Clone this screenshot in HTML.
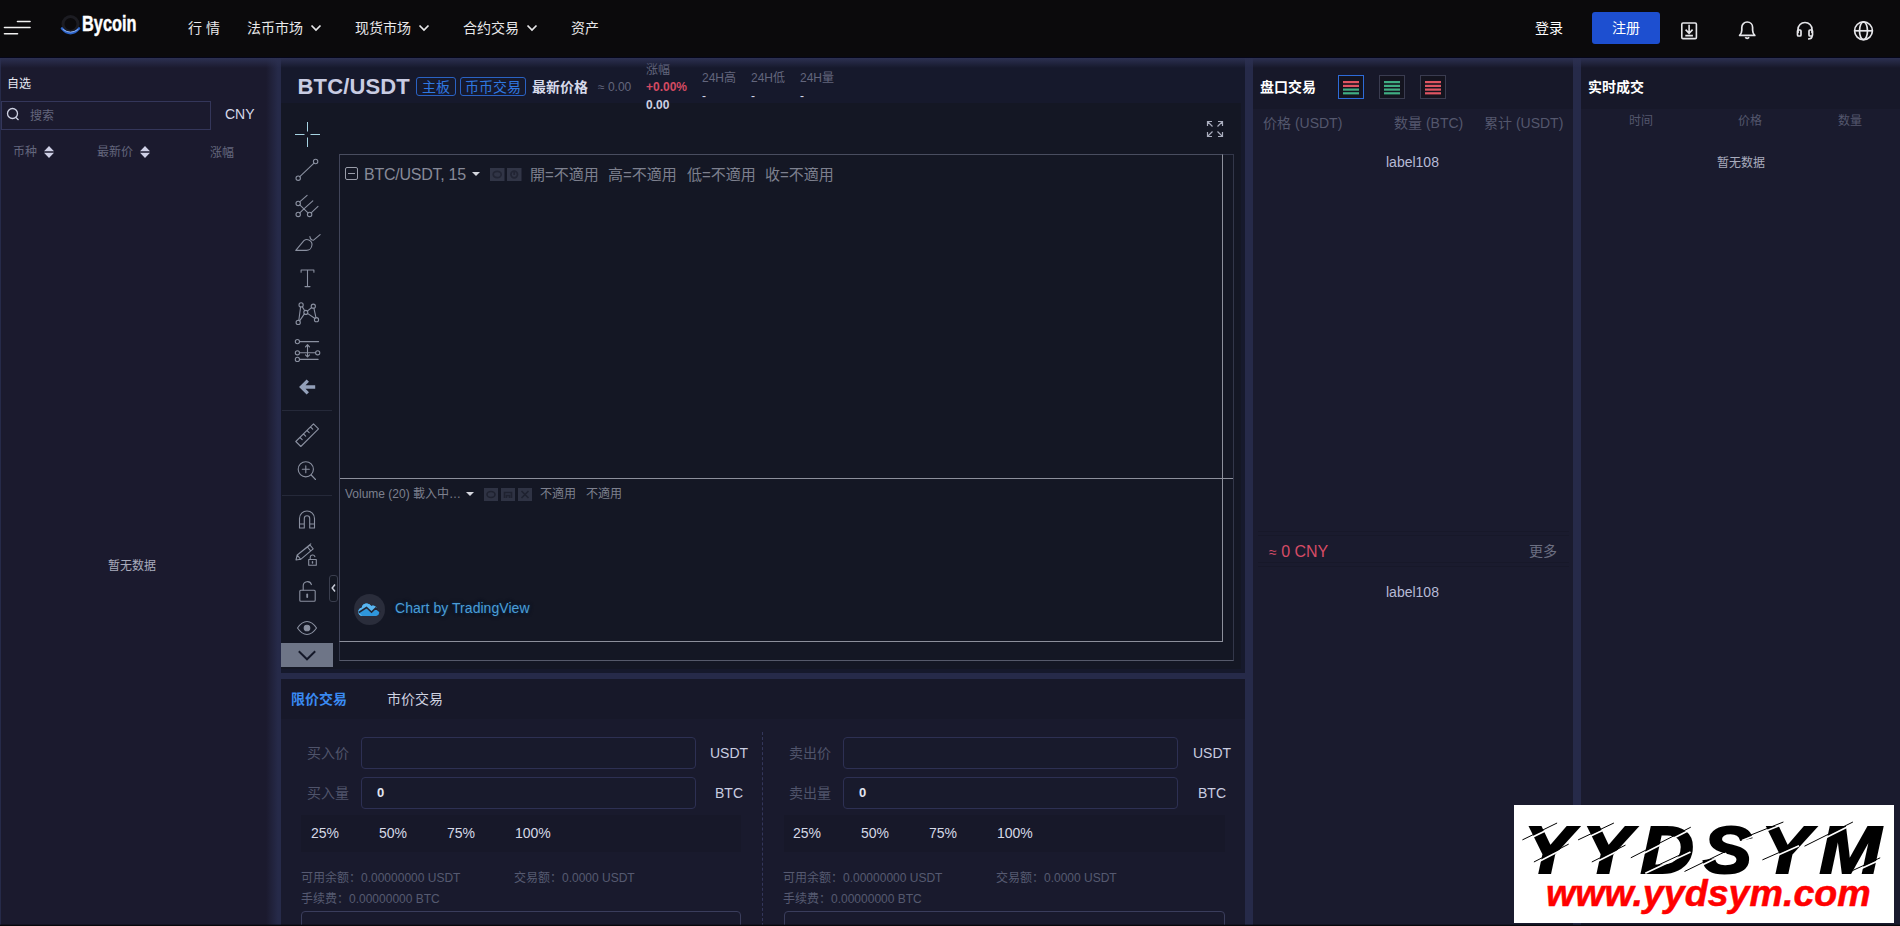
<!DOCTYPE html>
<html lang="zh-CN">
<head>
<meta charset="utf-8">
<title>BTC/USDT - Bycoin</title>
<style>
*{box-sizing:border-box;margin:0;padding:0}
html,body{width:1900px;height:926px;overflow:hidden;background:#262a49;font-family:"Liberation Sans","Noto Sans CJK SC",sans-serif;color:#c9cde0}
.abs{position:absolute}
.t{position:absolute;white-space:nowrap;line-height:1}
#hdr{position:absolute;left:0;top:0;width:1900px;height:58px;background:#0b0a0c}
.nav{color:#e8e8ea;font-size:14px}
.panel{position:absolute;background:#1a1b2e}
.grey{color:#63667d}
.dim{color:#54576d}
.obi{width:26px;height:24px;border:1px solid #3a3c50;background:#14141f}
.lbl{font-size:14px;color:#50546b}
.unit{font-size:14px;color:#c9cde0}
.pct{font-size:14px;color:#d5d8e6}
.inf{font-size:12px;color:#565a71}
.inp{width:335px;height:32px;border:1px solid #2d3053;border-radius:4px;background:#181a2c}
.tag{border:1px solid #2a62c4;border-radius:3px}
.leg{font-size:15px;color:#7d808e}
</style>
</head>
<body>
<!-- HEADER -->
<div id="hdr">
  <svg class="abs" style="left:0;top:14px" width="40" height="28" viewBox="0 0 40 28">
    <g stroke="#f2f2f2" stroke-width="1.6" stroke-linecap="round">
      <line x1="17.5" y1="7.5" x2="30" y2="7.5"/><line x1="4.5" y1="13.5" x2="30" y2="13.5"/><line x1="4.5" y1="19.8" x2="17.5" y2="19.8"/>
    </g>
  </svg>
  <svg class="abs" style="left:58px;top:13px" width="26" height="26" viewBox="0 0 26 26">
    <circle cx="12.5" cy="11" r="7.5" fill="none" stroke="#1c1c22" stroke-width="3"/>
    <path d="M4 15.5 Q12.5 25 21 15.5" fill="none" stroke="#2b63c9" stroke-width="2.6" stroke-linecap="round"/>
    <path d="M5 16.5 Q12.5 22 20 16.5" fill="none" stroke="#8fb0ee" stroke-width="1" stroke-linecap="round"/>
  </svg>
  <div class="t" id="logo" style="left:82px;top:13.8px;font-size:21.5px;font-weight:bold;color:#fff;-webkit-text-stroke:.4px #fff;transform:scaleX(.76);transform-origin:0 0;letter-spacing:0">Bycoin</div>
  <div class="t nav" style="left:188px;top:21px">行 情</div>
  <div class="t nav" style="left:247px;top:21px">法币市场</div>
  <div class="t nav" style="left:355px;top:21px">现货市场</div>
  <div class="t nav" style="left:463px;top:21px">合约交易</div>
  <div class="t nav" style="left:571px;top:21px">资产</div>
  <svg class="abs chev" style="left:309px;top:23px" width="14" height="10" viewBox="0 0 14 10"><path d="M2.5 2.5 L7 7 L11.5 2.5" fill="none" stroke="#e8e8ea" stroke-width="1.7"/></svg>
  <svg class="abs chev" style="left:417px;top:23px" width="14" height="10" viewBox="0 0 14 10"><path d="M2.5 2.5 L7 7 L11.5 2.5" fill="none" stroke="#e8e8ea" stroke-width="1.7"/></svg>
  <svg class="abs chev" style="left:525px;top:23px" width="14" height="10" viewBox="0 0 14 10"><path d="M2.5 2.5 L7 7 L11.5 2.5" fill="none" stroke="#e8e8ea" stroke-width="1.7"/></svg>
  <div class="t nav" style="left:1535px;top:21px;color:#fff">登录</div>
  <div class="abs" style="left:1592px;top:12px;width:68px;height:32px;background:#1d4fd0;border-radius:3px"></div>
  <div class="t nav" style="left:1612px;top:21px;color:#fff">注册</div>
  <!-- download -->
  <svg class="abs" style="left:1677px;top:18px" width="24" height="24" viewBox="0 0 24 24" fill="none" stroke="#e6e6ea" stroke-width="1.6">
    <rect x="4.800" y="5" width="14.600" height="15.600" rx="1.200"/><path d="M12.100 6.800v8.500M8.600 11.600l3.500 3.700l3.500-3.700M8.300 17.600h7.600" />
  </svg>
  <!-- bell -->
  <svg class="abs" style="left:1735px;top:18px" width="24" height="24" viewBox="0 0 24 24" fill="none" stroke="#e6e6ea" stroke-width="1.700" stroke-linejoin="round">
    <path d="M4.600 17.400h15.200c-1.500-1.400-2.200-3-2.200-5.200v-2.800c0-3.100-2.400-5.400-5.400-5.400s-5.400 2.300-5.400 5.400v2.800c0 2.200-.7 3.800-2.200 5.200z"/><path d="M10.300 19.300c.5.700 1.100 1 1.900 1s1.400-.3 1.900-1"/>
  </svg>
  <!-- headset -->
  <svg class="abs" style="left:1793px;top:18px" width="24" height="24" viewBox="0 0 24 24" fill="none" stroke="#e6e6ea" stroke-width="1.7">
    <path d="M5 15v-3.500c0-4 3-7 7-7s7 3 7 7V15"/><rect x="4.500" y="12" width="3.500" height="6" rx="1"/><rect x="16" y="12" width="3.500" height="6" rx="1"/><path d="M19 18c0 2-1.500 3-4 3"/>
  </svg>
  <!-- globe -->
  <svg class="abs" style="left:1851px;top:18px" width="24" height="24" viewBox="0 0 24 24" fill="none" stroke="#e6e6ea" stroke-width="1.7">
    <circle cx="12.500" cy="12.800" r="8.900"/><ellipse cx="12.500" cy="12.800" rx="4" ry="8.900"/><path d="M3.600 12.800h17.800"/>
  </svg>
</div>

<!-- LEFT PANEL -->
<div class="panel" id="left" style="left:1px;top:58px;width:271px;height:868px;background:#1b1a2e"></div>
<div class="t" style="left:7px;top:78px;font-size:12px;color:#e6e8f2">自选</div>
<div class="abs" style="left:1px;top:101px;width:210px;height:29px;border:1px solid #34365a"></div>
<svg class="abs" style="left:5px;top:106px" width="16" height="16" viewBox="0 0 16 16" fill="none" stroke="#cfd2e3" stroke-width="1.3"><circle cx="7.500" cy="7.500" r="5"/><path d="M11 11.500l2.500 2.500"/></svg>
<div class="t grey" style="left:30px;top:110px;font-size:12px">搜索</div>
<div class="t" style="left:225px;top:107px;font-size:14px;color:#d5d8e8">CNY</div>
<div class="t grey" style="left:13px;top:146px;font-size:12px">币种</div>
<div class="t grey" style="left:97px;top:146px;font-size:12px">最新价</div>
<div class="t grey" style="left:210px;top:147px;font-size:12px">涨幅</div>
<svg class="abs" style="left:43px;top:145px" width="12" height="14" viewBox="0 0 12 14"><path d="M6 1L11 6.200h-10zM6 13L1 7.800h10z" fill="#cfd0e6"/></svg>
<svg class="abs" style="left:139px;top:145px" width="12" height="14" viewBox="0 0 12 14"><path d="M6 1L11 6.200h-10zM6 13L1 7.800h10z" fill="#cfd0e6"/></svg>
<div class="t" style="left:108px;top:560px;font-size:12px;color:#a9acbd">暂无数据</div>

<div class="abs" style="left:266px;top:58px;width:12px;height:868px;background:linear-gradient(to right,#1b1a2e,#262a49)"></div>
<!-- CENTER TOP PANEL -->
<div class="panel" id="ctop" style="left:281px;top:58px;width:964px;height:615px;background:#16192c"></div>
<div class="abs" id="chartbg" style="left:281px;top:103px;width:960px;height:566px;background:#141724"></div>
<!-- CENTER BOTTOM PANEL -->
<div class="panel" id="cbot" style="left:281px;top:679px;width:964px;height:247px;background:#191a2d"></div>
<!-- ORDER BOOK PANEL -->
<div class="panel" id="ob" style="left:1253px;top:58px;width:320px;height:868px;background:#1a1b2e"></div>
<!-- TRADES PANEL -->
<div class="panel" id="tr" style="left:1581px;top:58px;width:319px;height:868px;background:#1a1b2e"></div>


<!-- TICKER ROW -->
<div class="t" style="left:297.500px;top:75.500px;font-size:22px;font-weight:bold;color:#c9cce2;letter-spacing:.15px">BTC/USDT</div>
<div class="abs tag" style="left:416px;top:77px;width:40px;height:19px"></div>
<div class="t" style="left:422px;top:80px;font-size:14px;color:#2f78e0">主板</div>
<div class="abs tag" style="left:460px;top:77px;width:66px;height:19px"></div>
<div class="t" style="left:465px;top:80px;font-size:14px;color:#2f78e0">币币交易</div>
<div class="t" style="left:532px;top:80px;font-size:14px;font-weight:bold;color:#d6d9ea">最新价格</div>
<div class="t grey" style="left:598px;top:81px;font-size:12px">≈ 0.00</div>
<div class="t grey" style="left:646px;top:63.500px;font-size:12px">涨幅</div>
<div class="t" style="left:646px;top:81px;font-size:12px;font-weight:bold;color:#d44a62">+0.00%</div>
<div class="t" style="left:646px;top:99px;font-size:12px;font-weight:bold;color:#cdd0e2">0.00</div>
<div class="t grey" style="left:702px;top:72px;font-size:12px">24H高</div>
<div class="t grey" style="left:751px;top:72px;font-size:12px">24H低</div>
<div class="t grey" style="left:800px;top:72px;font-size:12px">24H量</div>
<div class="t" style="left:702px;top:90px;font-size:12px;color:#d6d9ea">-</div>
<div class="t" style="left:751px;top:90px;font-size:12px;color:#d6d9ea">-</div>
<div class="t" style="left:800px;top:90px;font-size:12px;color:#d6d9ea">-</div>

<!-- CHART -->
<div class="abs" style="left:339px;top:154px;width:895px;height:507px;border:1px solid #33374a;border-bottom-color:#565a6b"></div>
<div class="abs" style="left:339px;top:154px;width:884px;height:488px;border:1px solid #8d909c;border-top-color:#494d5f;border-left-color:#41455a"></div>
<div class="abs" style="left:340px;top:478px;width:893px;height:1px;background:#8d909c"></div>
<!-- toolbar separators -->
<div class="abs" style="left:282px;top:410px;width:50px;height:1px;background:#252939"></div>
<div class="abs" style="left:282px;top:495px;width:50px;height:1px;background:#252939"></div>
<div class="abs" style="left:281px;top:643px;width:52px;height:24px;background:#6e7587"></div>
<svg class="abs" style="left:296.800px;top:647.500px" width="20" height="14" viewBox="0 0 20 14"><path d="M1.800 3.200L10 11.300L18.200 3.200" fill="none" stroke="#141828" stroke-width="1.900"/></svg>
<div class="abs" style="left:329px;top:575px;width:9px;height:27px;border:1px solid #3a3e4e;border-radius:3px;background:#131722"></div>
<svg class="abs" style="left:330px;top:583px" width="8" height="10" viewBox="0 0 8 10"><path d="M5 1.500L2.200 5L5 8.500" fill="none" stroke="#c8ccd8" stroke-width="1.500"/></svg>

<!-- legend -->
<svg class="abs" style="left:345px;top:167px" width="13" height="13" viewBox="0 0 13 13" fill="none" stroke="#9a9da9" stroke-width="1"><rect x=".5" y=".5" width="12" height="12" rx="1.500"/><path d="M3 6.500h7"/></svg>
<div class="t" style="left:364px;top:166.500px;font-size:16px;color:#878a98;letter-spacing:-.25px">BTC/USDT, 15</div>
<svg class="abs" style="left:471px;top:171px" width="10" height="6" viewBox="0 0 10 6"><path d="M1 1h8L5 5z" fill="#d5d7df"/></svg>
<svg class="abs" style="left:490px;top:168px" width="32" height="13" viewBox="0 0 32 13"><g fill="#313546"><rect x="0" y="0" width="14.500" height="13"/><rect x="17" y="0" width="14.500" height="13"/></g><g fill="none" stroke="#222534" stroke-width="1.700"><ellipse cx="7.200" cy="6.500" rx="4" ry="3.200"/><circle cx="24.200" cy="6.500" r="3.300"/><path d="M24.200 4v3"/></g></svg>
<div class="t leg" style="left:530px;top:167px">開=不適用</div>
<div class="t leg" style="left:608px;top:167px">高=不適用</div>
<div class="t leg" style="left:687px;top:167px">低=不適用</div>
<div class="t leg" style="left:765px;top:167px">收=不適用</div>

<div class="t" style="left:345px;top:488px;font-size:12px;color:#7d808e">Volume (20) 載入中…</div>
<svg class="abs" style="left:465px;top:491px" width="10" height="6" viewBox="0 0 10 6"><path d="M1 1h8L5 5z" fill="#d5d7df"/></svg>
<svg class="abs" style="left:484px;top:488px" width="48" height="13" viewBox="0 0 48 13"><g fill="#2f3344"><rect x="0" y="0" width="14" height="13"/><rect x="17" y="0" width="14" height="13"/><rect x="34" y="0" width="14" height="13"/></g><g fill="none" stroke="#1f2230" stroke-width="1.600"><ellipse cx="7" cy="6.500" rx="4" ry="3"/><path d="M20.500 10V4.500h7V10M22.500 10V7.500h3V10M37.500 3l7 7M44.500 3l-7 7"/></g></svg>
<div class="t" style="left:540px;top:488px;font-size:12px;color:#7d808e">不適用</div>
<div class="t" style="left:586px;top:488px;font-size:12px;color:#7d808e">不適用</div>

<!-- tradingview logo -->
<div class="abs" style="left:354px;top:594px;width:31px;height:31px;border-radius:50%;background:#2a2d3b"></div>
<svg class="abs" style="left:357px;top:600px" width="26" height="18" viewBox="0 0 26 18"><path d="M5.500 16a4.200 4.200 0 0 1-.8-8.300a5.200 5.200 0 0 1 9.600-1.700a4 4 0 0 1 5.600 2.900a3.700 3.700 0 0 1-.700 7.100z" fill="#2f97dc"/><path d="M5.500 16a4.200 4.200 0 0 1-.8-8.300a5.200 5.200 0 0 1 9.600-1.700a4 4 0 0 1 5.600 2.900a3.700 3.700 0 0 1 2.800 2.600L18.500 8.800l-4 4.200l-5-4.800L2 12.800" fill="#5ab6f0"/><path d="M1.800 12.500l7.700-5l5 4.600l4.200-4l4.800 4" fill="none" stroke="#232634" stroke-width="1.500"/></svg>
<div class="t" style="left:395px;top:601px;font-size:14px;color:#4c9dd6;text-shadow:0 0 3px #0d2a48,0 0 2px #0d2a48,0 0 4px #0b1424;letter-spacing:.05px">Chart by TradingView</div>

<!-- TOOLBAR ICONS -->
<svg class="abs" id="tools" style="left:282px;top:112px" width="52" height="540" viewBox="0 0 52 540" fill="none" stroke="#8a90a0" stroke-width="1.100" stroke-linecap="round" stroke-linejoin="round">
  <!-- crosshair c=(25.5,22.5) -->
  <g stroke="#a6d3e2" stroke-width="1" stroke-linecap="butt"><path d="M25.500 10v9.500M25.500 25.500v9.500M13 22.500h9.500M28.500 22.500h9.500"/></g>
  <!-- trend line -->
  <path d="M17.800 64.600L32 51.100"/><circle cx="16.200" cy="66.200" r="2.200"/><circle cx="33.600" cy="49.500" r="2.200"/>
  <!-- pitchfork -->
  <path d="M17.700 89.900L25.100 83.300M17.800 92.900L26 100.800M21.900 96.900L30.800 88.900M29.200 100.800L36 94.300M17.800 100.800L21.900 96.900"/><circle cx="16.200" cy="91.400" r="2.200"/><circle cx="16.200" cy="102.400" r="2.200"/><circle cx="27.600" cy="102.400" r="2.200"/>
  <!-- brush -->
  <path d="M13.800 138.400l8.100-9.700c1.500-1.300 3.400-1.400 4.900-.8c2 .9 3.300 2.700 3.200 4.800c-.3 3.300-2.700 5.700-5.700 5.700z"/><path d="M27.900 124.600c.3 2.300 2 3.700 3.700 3.600l6.500-5.500"/>
  <!-- text T -->
  <path d="M19.100 160.300v-2.300h12.800v2.300M25.500 158v16.600M23 174.600h5"/>
  <!-- pattern -->
  <path d="M16.800 208.500L18.600 194.900M20.200 194.600L22.700 198.700M25.300 199.100L29.800 195.500M31.900 196.100L34 205.800M17.600 208.900L22.400 201.900M25.500 201.400L33 206.500"/><circle cx="19.100" cy="192.900" r="2.100"/><circle cx="31.300" cy="194.200" r="2.100"/><circle cx="23.800" cy="200.400" r="2"/><circle cx="16.200" cy="210.400" r="2.100"/><circle cx="34.500" cy="207.700" r="2.100"/>
  <!-- fib -->
  <path d="M17.600 229.600h19M17.600 240.800h16M17.600 247.400h18.500M25.500 232.800v12M23.500 234.800l2-2.200l2 2.200M23.500 242.800l2 2.200l2-2.200"/><circle cx="15.400" cy="229.600" r="2.100"/><circle cx="15.400" cy="240.800" r="2.100"/><circle cx="35.700" cy="240.800" r="2.100"/><circle cx="15.400" cy="247.400" r="2.100"/>
  <!-- back arrow c=(25,275) -->
  <path d="M33.200 275H20.500M25.800 268.600L19.400 275l6.400 6.400" stroke="#93a0b9" stroke-width="3.300" stroke-linecap="butt" stroke-linejoin="miter"/>
  <!-- ruler c=(25,323) -->
  <path d="M13.800 329.500L31.500 311.800l5 5L18.800 334.500zM18 325.500l2.200 2.200M21.500 322l2.200 2.200M25 318.500l2.200 2.200M28.500 315l2.200 2.200"/>
  <!-- zoom c=(25,358) -->
  <circle cx="23.800" cy="357.300" r="7.600"/><path d="M29.200 363l4.300 4.500M20.300 357.300h7M23.800 353.800v7"/>
  <!-- magnet c=(25,407) -->
  <path d="M17.500 416v-9.500a7.500 7.500 0 0 1 15 0v9.500h-4.800v-9.500a2.700 2.700 0 0 0-5.400 0v9.500zM17.500 412h4.800M27.700 412h4.800"/>
  <!-- pencil lock c=(25,443) -->
  <path d="M14 448l1.200-5L28 433l3.200 3.800L18.700 447.300zM25.500 435l3.200 3.800M15.200 443l3.500 4.300M16.800 441.700l12-9.800"/><rect x="26.700" y="447.500" width="7.600" height="5.800"/><path d="M28.200 447.500v-2.200a2.400 2.400 0 0 1 4.700-.6"/><path d="M30.500 449.800v1.200" stroke-width="1.400"/>
  <!-- lock open c=(25,478) -->
  <rect x="17.800" y="478.200" width="15.400" height="11" rx="1"/><path d="M21.200 478v-4.200a4.200 4.200 0 0 1 8.200-1.200"/><path d="M25.200 482.500v2.600" stroke-width="1.800"/>
  <!-- eye c=(25,516) -->
  <path d="M15.500 516c3-4.500 6-6.500 9.500-6.500s6.500 2 9.500 6.500c-3 4.500-6 6.500-9.500 6.500s-6.500-2-9.500-6.500z"/><circle cx="25" cy="516" r="2.800" fill="#8a90a0"/>
</svg>
<!-- fullscreen -->
<svg class="abs" style="left:1206px;top:120px" width="18" height="18" viewBox="0 0 18 18" fill="none" stroke="#a9adbd" stroke-width="1.200"><path d="M1.500 6V1.500H6M1.500 1.500l5 5M12 1.500h4.500V6M16.500 1.500l-5 5M1.500 12v4.500H6M1.500 16.500l5-5M12 16.500h4.500V12M16.500 16.500l-5-5"/></svg>

<!-- ORDER BOOK -->
<div class="abs" style="left:1253px;top:58px;width:320px;height:51px;background:#171829"></div>
<div class="t" style="left:1260px;top:80px;font-size:14px;font-weight:bold;color:#fff">盘口交易</div>
<div class="abs obi" style="left:1338px;top:75px;border-color:#2d6bd8"></div>
<div class="abs obi" style="left:1379px;top:75px"></div>
<div class="abs obi" style="left:1420px;top:75px"></div>
<svg class="abs" style="left:1338px;top:75px" width="110" height="24" viewBox="0 0 110 24">
  <g fill="#de5562"><rect x="5" y="6" width="16" height="2.200"/><rect x="5" y="9.800" width="16" height="2.200"/><rect x="87" y="6" width="16" height="2.200"/><rect x="87" y="9.800" width="16" height="2.200"/><rect x="87" y="13.500" width="16" height="2.200"/><rect x="87" y="17.200" width="16" height="2.200"/></g>
  <g fill="#40ad82"><rect x="5" y="13.500" width="16" height="2.200"/><rect x="5" y="17.200" width="16" height="2.200"/><rect x="46" y="6" width="16" height="2.200"/><rect x="46" y="9.800" width="16" height="2.200"/><rect x="46" y="13.500" width="16" height="2.200"/><rect x="46" y="17.200" width="16" height="2.200"/></g>
</svg>
<div class="t dim" style="left:1263px;top:116px;font-size:14px">价格 (USDT)</div>
<div class="t dim" style="left:1394px;top:116px;font-size:14px">数量 (BTC)</div>
<div class="t dim" style="left:1484px;top:116px;font-size:14px">累计 (USDT)</div>
<div class="t" style="left:1386px;top:155px;font-size:14px;color:#b6bad6">label108</div>
<div class="abs" style="left:1258px;top:531px;width:311px;height:5px;border-top:1px solid #171829;border-bottom:1px solid #171829"></div><div class="abs" style="left:1258px;top:562px;width:311px;height:5px;border-top:1px solid #171829;border-bottom:1px solid #171829"></div>
<div class="t" style="left:1269px;top:544px;font-size:16px;color:#d64c66"><span style="font-size:14px">≈</span> 0 CNY</div>
<div class="t" style="left:1529px;top:544px;font-size:14px;color:#6c6f82">更多</div>
<div class="t" style="left:1386px;top:585px;font-size:14px;color:#b6bad6">label108</div>

<!-- TRADES -->
<div class="abs" style="left:1581px;top:58px;width:319px;height:51px;background:#171829"></div>
<div class="t" style="left:1588px;top:80px;font-size:14px;font-weight:bold;color:#fff">实时成交</div>
<div class="t dim" style="left:1629px;top:115px;font-size:12px">时间</div>
<div class="t dim" style="left:1738px;top:115px;font-size:12px">价格</div>
<div class="t dim" style="left:1838px;top:115px;font-size:12px">数量</div>
<div class="t" style="left:1717px;top:157px;font-size:12px;color:#a9acbd">暂无数据</div>

<!-- TRADE FORM -->
<div class="abs" style="left:281px;top:679px;width:964px;height:40px;background:#171829"></div>
<div class="t" style="left:291px;top:692px;font-size:14px;font-weight:bold;color:#3a8af2">限价交易</div>
<div class="t" style="left:387px;top:692px;font-size:14px;color:#cfd2e0">市价交易</div>
<div class="abs" style="left:762px;top:732px;width:0;height:194px;border-left:1px dashed #33365a"></div>

<div class="t lbl" style="left:307px;top:746px">买入价</div>
<div class="abs inp" style="left:361px;top:737px"></div>
<div class="t unit" style="left:710px;top:746px">USDT</div>
<div class="t lbl" style="left:307px;top:786px">买入量</div>
<div class="abs inp" style="left:361px;top:777px"></div>
<div class="t" style="left:377px;top:786px;font-size:13px;font-weight:bold;color:#e3e5f0">0</div>
<div class="t unit" style="left:715px;top:786px">BTC</div>
<div class="abs" style="left:301px;top:815px;width:440px;height:37px;background:#171829"></div>
<div class="t pct" style="left:311px;top:826px">25%</div>
<div class="t pct" style="left:379px;top:826px">50%</div>
<div class="t pct" style="left:447px;top:826px">75%</div>
<div class="t pct" style="left:515px;top:826px">100%</div>
<div class="t inf" style="left:301px;top:872px">可用余额：0.00000000 USDT</div>
<div class="t inf" style="left:514px;top:872px">交易额：0.0000 USDT</div>
<div class="t inf" style="left:301px;top:893px">手续费：0.00000000 BTC</div>
<div class="abs" style="left:301px;top:911px;width:440px;height:30px;border:1px solid #3a3d5c;border-radius:4px"></div>

<div class="t lbl" style="left:789px;top:746px">卖出价</div>
<div class="abs inp" style="left:843px;top:737px"></div>
<div class="t unit" style="left:1193px;top:746px">USDT</div>
<div class="t lbl" style="left:789px;top:786px">卖出量</div>
<div class="abs inp" style="left:843px;top:777px"></div>
<div class="t" style="left:859px;top:786px;font-size:13px;font-weight:bold;color:#e3e5f0">0</div>
<div class="t unit" style="left:1198px;top:786px">BTC</div>
<div class="abs" style="left:784px;top:815px;width:441px;height:37px;background:#171829"></div>
<div class="t pct" style="left:793px;top:826px">25%</div>
<div class="t pct" style="left:861px;top:826px">50%</div>
<div class="t pct" style="left:929px;top:826px">75%</div>
<div class="t pct" style="left:997px;top:826px">100%</div>
<div class="t inf" style="left:783px;top:872px">可用余额：0.00000000 USDT</div>
<div class="t inf" style="left:996px;top:872px">交易额：0.0000 USDT</div>
<div class="t inf" style="left:783px;top:893px">手续费：0.00000000 BTC</div>
<div class="abs" style="left:784px;top:911px;width:441px;height:30px;border:1px solid #3a3d5c;border-radius:4px"></div>
<div class="abs" style="left:0;top:58px;width:1900px;height:10px;background:linear-gradient(#2c3051,rgba(44,48,81,0))"></div>
<div class="abs" style="left:0;top:57px;width:1900px;height:1px;background:#05061a"></div>
<div class="abs" style="left:0;top:925px;width:1900px;height:1px;background:#08080c"></div>
<div class="abs" style="left:0;top:924px;width:1900px;height:1px;background:rgba(8,8,12,.35)"></div>
<!-- WATERMARK -->
<div class="abs" id="wm" style="left:1514px;top:805px;width:380px;height:118px;background:#fff;overflow:hidden">
  <div class="t" id="wm1" style="left:10px;top:11.5px;font-size:66px;font-weight:bold;font-style:italic;color:#000;-webkit-text-stroke:2px #000;transform:scaleX(1.12);transform-origin:0 0;letter-spacing:8px">YYDSYM</div>
  <svg class="abs" style="left:0;top:0" width="380" height="118" viewBox="0 0 380 118"><g stroke="#fff" stroke-width="1.700"><line x1="9.2" y1="36.6" x2="43.9" y2="19.7"/><line x1="20.7" y1="58.7" x2="55.5" y2="40.8"/><line x1="64.9" y1="36.6" x2="100.7" y2="19.7"/><line x1="78.6" y1="58.7" x2="112.3" y2="41.8"/><line x1="117.6" y1="54.5" x2="177.6" y2="23.9"/><line x1="131.3" y1="68.2" x2="176.5" y2="47.1"/><line x1="171.3" y1="68.2" x2="212.3" y2="48.2"/><line x1="228.1" y1="35.5" x2="270.2" y2="18.7"/><line x1="249.2" y1="56.6" x2="285.0" y2="40.8"/><line x1="291.3" y1="42.9" x2="339.7" y2="18.7"/><line x1="339.7" y1="67.1" x2="367.0" y2="54.5"/></g><g stroke="#000" stroke-width="1"><line x1="8.4" y1="34.9" x2="43.1" y2="18.0"/><line x1="19.9" y1="57.0" x2="54.7" y2="39.1"/><line x1="64.1" y1="34.9" x2="99.9" y2="18.0"/><line x1="77.8" y1="57.0" x2="111.5" y2="40.1"/><line x1="116.8" y1="52.8" x2="176.8" y2="22.2"/><line x1="130.5" y1="66.5" x2="175.7" y2="45.4"/><line x1="170.5" y1="66.5" x2="211.5" y2="46.5"/><line x1="227.3" y1="33.8" x2="269.4" y2="17.0"/><line x1="248.4" y1="54.9" x2="284.2" y2="39.1"/><line x1="290.5" y1="41.2" x2="338.9" y2="17.0"/><line x1="338.9" y1="65.4" x2="366.2" y2="52.8"/></g></svg>
  <div class="t" id="wm2" style="left:32px;top:71px;font-size:36px;font-weight:bold;font-style:italic;color:#f00;-webkit-text-stroke:.5px #f00;transform:scaleX(1.045);transform-origin:0 0">www.yydsym.com</div>
</div>
</body>
</html>
